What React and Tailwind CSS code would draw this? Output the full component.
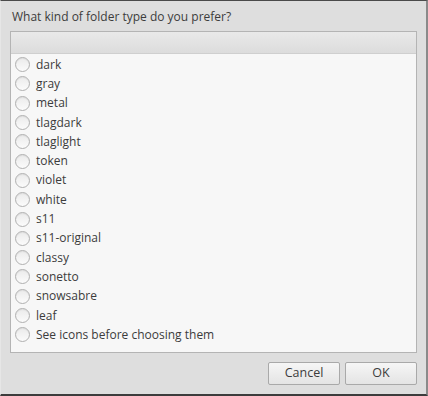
const OPTIONS = [
  'dark',
  'gray',
  'metal',
  'tlagdark',
  'tlaglight',
  'token',
  'violet',
  'white',
  's11',
  's11-original',
  'classy',
  'sonetto',
  'snowsabre',
  'leaf',
  'See icons before choosing them',
]

function Radio() {
  return (
    <span className="h-[15px] w-[15px] shrink-0 rounded-full border border-[#b0b0b0] bg-gradient-to-b from-[#ebebeb] to-[#fbfbfb] shadow-[inset_0_1px_1px_rgba(0,0,0,0.06)]" />
  )
}

export default function App() {
  return (
    <div
      className="flex h-[396px] w-[428px] flex-col border-t border-r-2 border-b-2 border-l border-t-[#4a4a4a] border-r-[#8a8a8a] border-b-[#3c3c3c] border-l-[#e6e6e6] bg-[#dedede] text-[#3c3c3c]"
      style={{ fontFamily: '"Open Sans", "DejaVu Sans", sans-serif' }}
    >
      <div className="flex h-[30px] items-center pl-[11px] pt-[1px] text-[12px] leading-none">
        What kind of folder type do you prefer?
      </div>
      <div className="mx-[9px] flex h-[322px] flex-col border border-[#b4b4b4] bg-[#f7f7f7]">
        <div className="h-[22px] shrink-0 border-b border-[#cfcfcf] bg-gradient-to-b from-[#e9e9e9] to-[#dcdcdc]" />
        <div className="flex flex-col pt-[1px]">
          {OPTIONS.map((o) => (
            <div key={o} className="flex h-[19.3px] items-center gap-[6px] pl-[4px] text-[12px]">
              <Radio />
              <span>{o}</span>
            </div>
          ))}
        </div>
      </div>
      <div className="flex flex-1 items-start justify-end gap-[5px] pr-[9px] pt-[9px]">
        <button className="h-[23px] w-[72px] rounded-[2px] border border-[#a9a9a9] bg-gradient-to-b from-[#f6f6f6] to-[#e4e4e4] text-[12.5px] text-[#3c3c3c]">
          Cancel
        </button>
        <button className="h-[23px] w-[72px] rounded-[2px] border border-[#a9a9a9] bg-gradient-to-b from-[#f6f6f6] to-[#e4e4e4] text-[12.5px] text-[#3c3c3c]">
          OK
        </button>
      </div>
    </div>
  )
}
